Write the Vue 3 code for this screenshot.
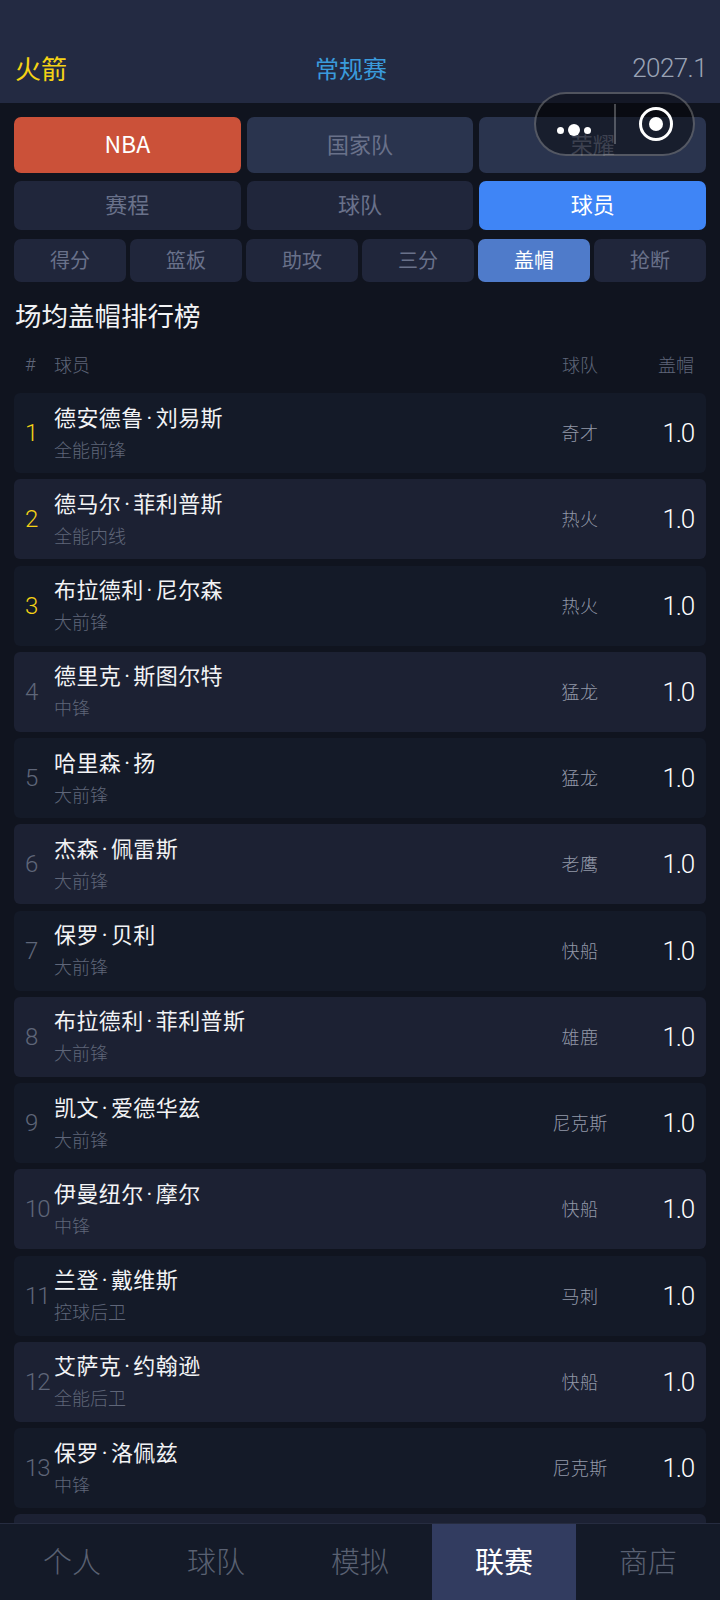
<script setup>
import { shallowRef } from 'vue'

const leagues = ['NBA', '国家队', '荣耀']
const views = ['赛程', '球队', '球员']
const stats = ['得分', '篮板', '助攻', '三分', '盖帽', '抢断']
const navs = ['个人', '球队', '模拟', '联赛', '商店']

const players = [
  { first: '德安德鲁', last: '刘易斯', pos: '全能前锋', team: '奇才' },
  { first: '德马尔', last: '菲利普斯', pos: '全能内线', team: '热火' },
  { first: '布拉德利', last: '尼尔森', pos: '大前锋', team: '热火' },
  { first: '德里克', last: '斯图尔特', pos: '中锋', team: '猛龙' },
  { first: '哈里森', last: '扬', pos: '大前锋', team: '猛龙' },
  { first: '杰森', last: '佩雷斯', pos: '大前锋', team: '老鹰' },
  { first: '保罗', last: '贝利', pos: '大前锋', team: '快船' },
  { first: '布拉德利', last: '菲利普斯', pos: '大前锋', team: '雄鹿' },
  { first: '凯文', last: '爱德华兹', pos: '大前锋', team: '尼克斯' },
  { first: '伊曼纽尔', last: '摩尔', pos: '中锋', team: '快船' },
  { first: '兰登', last: '戴维斯', pos: '控球后卫', team: '马刺' },
  { first: '艾萨克', last: '约翰逊', pos: '全能后卫', team: '快船' },
  { first: '保罗', last: '洛佩兹', pos: '中锋', team: '尼克斯' }
]

const league = shallowRef('NBA')
const view = shallowRef('球员')
const stat = shallowRef('盖帽')
const nav = shallowRef('联赛')
</script>

<template>
  <div class="page">
    <header class="top">
      <span class="club">火箭</span>
      <span class="season">常规赛</span>
      <span class="date">2027.1</span>
    </header>

    <div class="capsule" aria-hidden="true">
      <span class="capsule-dots"><i></i><i class="big"></i><i></i></span>
      <span class="capsule-line"></span>
      <svg class="capsule-target" width="36" height="36" viewBox="0 0 36 36">
        <circle cx="18" cy="18" r="15.5" fill="none" stroke="#fff" stroke-width="3" />
        <circle cx="18" cy="18" r="7" fill="#fff" />
      </svg>
    </div>

    <nav class="tabs league-tabs">
      <button v-for="item in leagues" :key="item" :class="{ on: league === item }" @click="league = item">{{ item }}</button>
    </nav>
    <nav class="tabs view-tabs">
      <button v-for="item in views" :key="item" :class="{ on: view === item }" @click="view = item">{{ item }}</button>
    </nav>
    <nav class="stat-tabs">
      <button v-for="item in stats" :key="item" :class="{ on: stat === item }" @click="stat = item">{{ item }}</button>
    </nav>

    <h2 class="title">场均盖帽排行榜</h2>

    <div class="head">
      <span class="hash">#</span>
      <span>球员</span>
      <span class="team">球队</span>
      <span class="score">盖帽</span>
    </div>

    <ul class="list">
      <li v-for="(p, index) in players" :key="index" class="row">
        <span class="rank" :class="{ top3: index < 3 }">{{ index + 1 }}</span>
        <div class="who">
          <strong>{{ p.first }}<span class="dot">·</span>{{ p.last }}</strong>
          <small>{{ p.pos }}</small>
        </div>
        <span class="team">{{ p.team }}</span>
        <span class="score">1.0</span>
      </li>
      <li class="row"></li>
    </ul>

    <footer class="bottom">
      <button v-for="item in navs" :key="item" :class="{ on: nav === item }" @click="nav = item">{{ item }}</button>
    </footer>
  </div>
</template>

<style>
html,
body {
  margin: 0;
  background: #10141f;
}
</style>

<style scoped>
.page {
  position: relative;
  height: 1600px;
  overflow: hidden;
  background: #10141f;
  color: #fff;
  font-family: "Noto Sans CJK SC", "Noto Sans", sans-serif;
  font-weight: 300;
}

button {
  border: 0;
  padding: 0;
  font: inherit;
  color: inherit;
  background: none;
}

.top {
  height: 103px;
  box-sizing: border-box;
  padding: 0 13px 18px 15px;
  display: grid;
  grid-template-columns: 300px auto 1fr;
  align-items: end;
  background: #232a42;
  font-size: 24px;
  line-height: 34px;
}

.club {
  color: #f5d215;
  font-size: 26px;
  font-weight: 400;
}

.season {
  color: #3a9bdc;
  font-weight: 400;
}

.date {
  justify-self: end;
  color: #9aa3b5;
  font-family: Roboto, sans-serif;
  font-size: 26px;
  letter-spacing: -0.6px;
}

.capsule {
  position: absolute;
  top: 92px;
  left: 534px;
  width: 161px;
  height: 64px;
  box-sizing: border-box;
  border: 2px solid rgba(255, 255, 255, 0.26);
  border-radius: 32px;
  background: rgba(0, 0, 0, 0.42);
  z-index: 2;
}

.capsule-dots {
  position: absolute;
  left: 21px;
  top: 30px;
  width: 34px;
  display: flex;
  align-items: center;
  justify-content: space-between;
}

.capsule-dots i {
  width: 7px;
  height: 7px;
  border-radius: 50%;
  background: #fff;
}

.capsule-dots i.big {
  width: 12px;
  height: 12px;
}

.capsule-line {
  position: absolute;
  left: 78px;
  top: 10px;
  width: 2px;
  height: 40px;
  background: rgba(255, 255, 255, 0.26);
}

.capsule-target {
  position: absolute;
  left: 102px;
  top: 12px;
}

.tabs {
  display: grid;
  grid-template-columns: repeat(3, 1fr);
  gap: 6px;
  padding: 0 14px;
}

.tabs button,
.stat-tabs button {
  border-radius: 7px;
  color: #69718a;
  font-weight: 400;
}

.tabs button {
  padding-bottom: 5px;
}

.stat-tabs button {
  padding-bottom: 2px;
}

.league-tabs {
  margin-top: 14px;
}

.league-tabs button {
  height: 56px;
  background: #2a344e;
  font-size: 22px;
}

.league-tabs button.on {
  background: #cb5139;
  color: #fff;
  font-size: 23px;
}

.view-tabs {
  margin-top: 8px;
}

.view-tabs button {
  height: 49px;
  background: #20263b;
  font-size: 22px;
}

.view-tabs button.on {
  background: #3f85f6;
  color: #fff;
}

.stat-tabs {
  display: grid;
  grid-template-columns: repeat(6, 1fr);
  gap: 4px;
  margin-top: 9px;
  padding: 0 14px;
}

.stat-tabs button {
  height: 43px;
  background: #20263b;
  font-size: 20px;
}

.stat-tabs button.on {
  background: #4f7bca;
  color: #fff;
}

.title {
  margin: 13px 15px 0;
  font-size: 26.5px;
  line-height: 40px;
  font-weight: 400;
  color: #f2f3f5;
}

.head,
.row {
  display: grid;
  grid-template-columns: 29px 1fr 90px 69px;
  align-items: center;
  margin: 0 14px;
  padding: 0 12px 0 11px;
}

.head {
  height: 50px;
  margin-top: 4px;
  margin-bottom: 4px;
  color: #5f6679;
  font-size: 18px;
}

.hash {
  font-family: Roboto, sans-serif;
}

.team {
  text-align: center;
}

.score {
  text-align: right;
}

.list {
  list-style: none;
  margin: 0;
  padding: 0;
  display: flex;
  flex-direction: column;
  gap: 6.25px;
}

.row {
  height: 80px;
  border-radius: 6px;
  background: #141a28;
}

.row:nth-child(even) {
  background: #1c2133;
}

.rank {
  color: #5f6679;
  font-family: Roboto, sans-serif;
  font-size: 24px;
  letter-spacing: -1px;
}

.rank.top3 {
  color: #f5d215;
}

.who {
  display: flex;
  flex-direction: column;
  gap: 1px;
  padding-bottom: 2px;
}

.who strong {
  font-family: Roboto, "Noto Sans CJK SC", sans-serif;
  font-size: 22px;
  line-height: 32px;
  font-weight: 400;
  letter-spacing: 0.4px;
  color: #f2f3f5;
}

.dot {
  margin: 0 3px;
}

.who small {
  font-size: 18px;
  line-height: 26px;
  color: #5f6679;
}

.row .team {
  padding-bottom: 2px;
  color: #9298a8;
  font-size: 18px;
  letter-spacing: 0.4px;
}

.row .score {
  font-family: Roboto, sans-serif;
  font-size: 26px;
  letter-spacing: -1.2px;
  color: #fff;
}

.bottom {
  position: absolute;
  left: 0;
  right: 0;
  bottom: 0;
  height: 77px;
  box-sizing: border-box;
  display: grid;
  grid-template-columns: repeat(5, 1fr);
  border-top: 1px solid #262c40;
  background: #141a28;
}

.bottom button {
  padding-bottom: 4px;
  color: #5a6172;
  font-size: 29px;
}

.bottom button.on {
  background: #323c60;
  color: #fff;
  font-weight: 400;
}
</style>
